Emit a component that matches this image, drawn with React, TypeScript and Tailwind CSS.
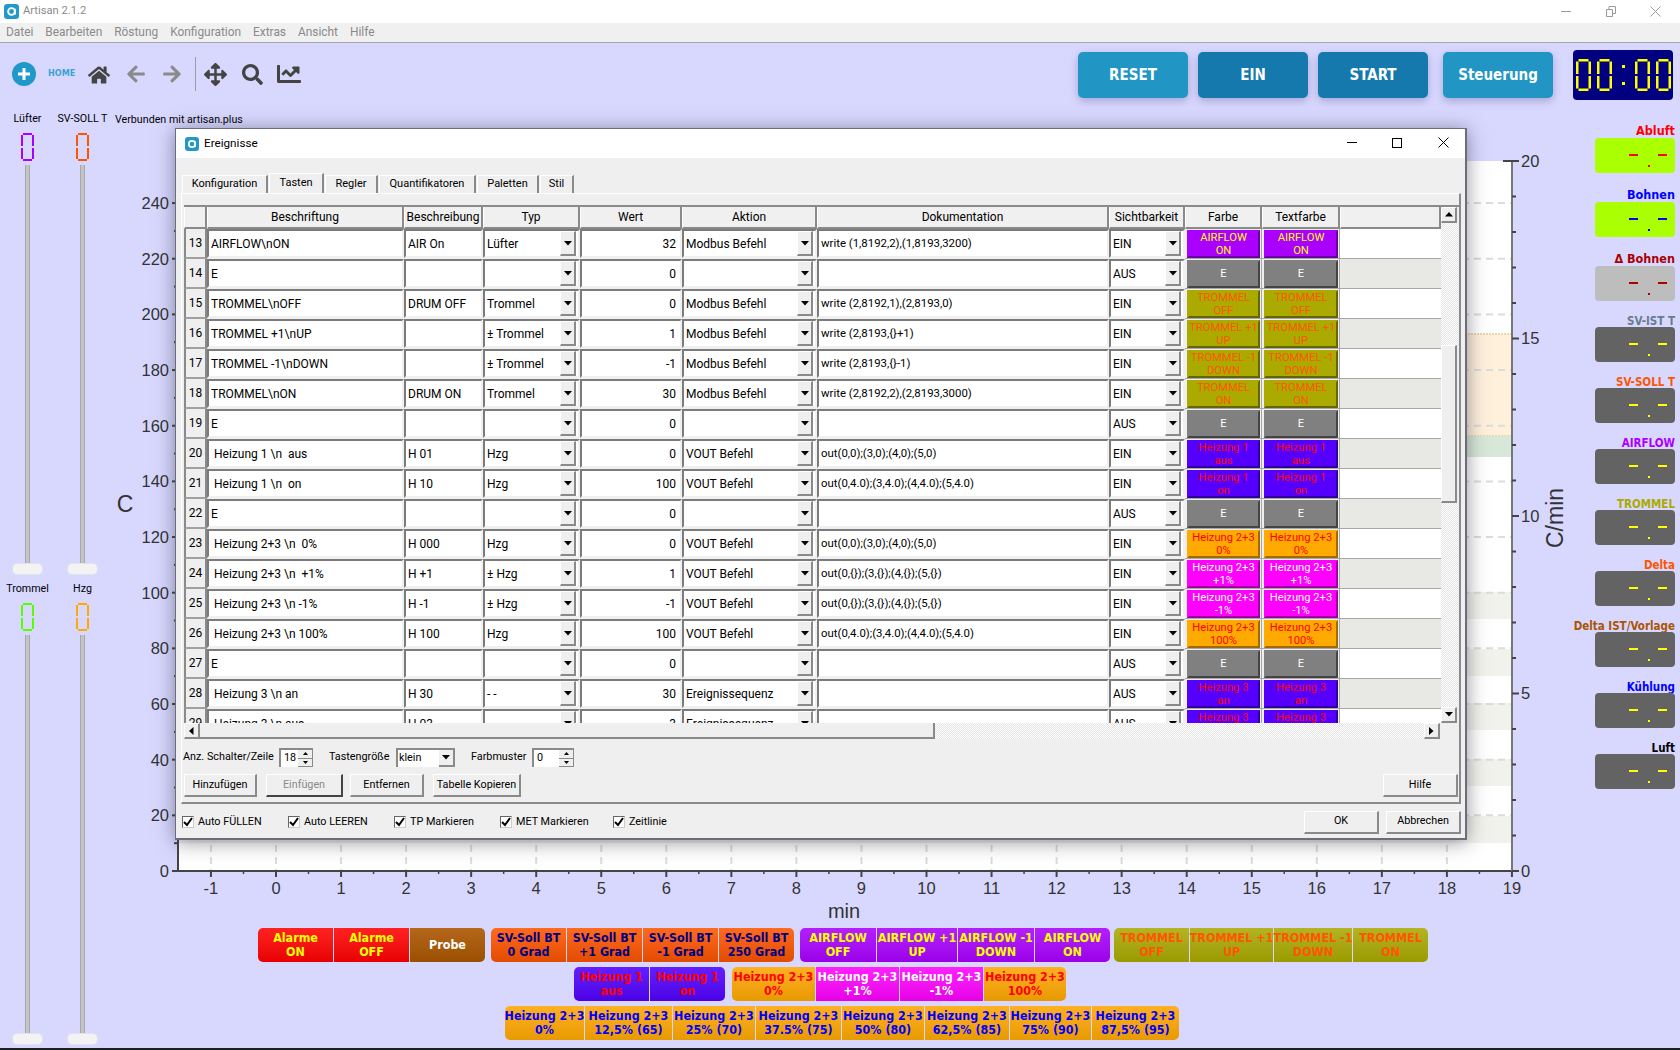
import React from 'react';
import { FaHome, FaArrowLeft, FaArrowRight, FaArrowsAlt, FaSearch, FaChartLine } from 'react-icons/fa';

const AppIcon = ({ s = 15 }: { s?: number }) => (
  <svg width={s} height={s} viewBox="0 0 16 16" className="shrink-0">
    <rect x="0" y="0" width="16" height="16" rx="3.5" fill="#2098c8" />
    <circle cx="8" cy="8" r="3.6" fill="none" stroke="#fff" strokeWidth="2" />
    <path d="M11.6 5v6.4" stroke="#fff" strokeWidth="2" />
  </svg>
);

const Zero = ({ w, h, sw, color }: { w: number; h: number; sw: number; color: string }) => {
  const m = h / 2;
  return (
    <svg width={w} height={h} viewBox={`0 0 ${w} ${h}`} className="block shrink-0">
      <g stroke={color} strokeWidth={sw} fill="none">
        <path d={`M${sw} ${sw / 2}H${w - sw}`} />
        <path d={`M${sw} ${h - sw / 2}H${w - sw}`} />
        <path d={`M${sw / 2} ${sw}V${m - 1}`} />
        <path d={`M${sw / 2} ${m + 1}V${h - sw}`} />
        <path d={`M${w - sw / 2} ${sw}V${m - 1}`} />
        <path d={`M${w - sw / 2} ${m + 1}V${h - sw}`} />
      </g>
    </svg>
  );
};

/* ---------- sliders ---------- */
const Handle = () => <div className="h-[12px] w-[31px] rounded-[5px] bg-[#f3f3f3] border border-[#e2e2ee] shrink-0" />;

const SliderCol = ({ top, bottom, topColor, bottomColor }: { top: string; bottom: string; topColor: string; bottomColor: string }) => (
  <div className="w-[55px] flex flex-col items-center">
    <div className="h-[34px] pt-[13px] text-[10.7px] leading-[14px] text-black whitespace-nowrap">{top}</div>
    <Zero w={13} h={28} sw={2} color={topColor} />
    <div className="mt-[4px] h-[398px] w-[5px] bg-[#c4c4c4] border-x border-[#a8a8a8]" />
    <Handle />
    <div className="h-[28px] flex items-center text-[10.7px] text-black">{bottom}</div>
    <Zero w={13} h={28} sw={2} color={bottomColor} />
    <div className="mt-[4px] h-[398px] w-[5px] bg-[#c4c4c4] border-x border-[#a8a8a8]" />
    <Handle />
  </div>
);

/* ---------- right LCD column ---------- */
const lcds = [
  { l: 'Abluft', c: '#ff0000', bg: '#aaff00', big: true },
  { l: 'Bohnen', c: '#0000ff', bg: '#aaff00', big: true },
  { l: 'Δ Bohnen', c: '#aa0000', bg: '#bdbdbd', big: true },
  { l: 'SV-IST T', c: '#6a7b8c', bg: '#636363', d: '#ffff00' },
  { l: 'SV-SOLL T', c: '#ff5500', bg: '#636363', d: '#ffff00' },
  { l: 'AIRFLOW', c: '#aa00ff', bg: '#636363', d: '#ffff00' },
  { l: 'TROMMEL', c: '#aaaa00', bg: '#636363', d: '#ffff00' },
  { l: 'Delta', c: '#ff5500', bg: '#636363', d: '#ffff00' },
  { l: 'Delta IST/Vorlage', c: '#aa5500', bg: '#636363', d: '#ffff00' },
  { l: 'Kühlung', c: '#0000ff', bg: '#636363', d: '#ffff00' },
  { l: 'Luft', c: '#000000', bg: '#636363', d: '#ffff00' },
] as { l: string; c: string; bg: string; big?: boolean; d?: string }[];

const Lcd = ({ l, c, bg, big, d }: { l: string; c: string; bg: string; big?: boolean; d?: string }) => {
  const dc = d || c;
  return (
    <div className={`flex flex-col items-end ${big ? 'h-[64px]' : 'h-[61px]'}`}>
      <div
        className={`font-['DejaVu_Sans'] font-bold [font-stretch:condensed] whitespace-nowrap text-right ${big ? 'h-[19px] text-[12.5px] leading-[23px]' : 'h-[16px] text-[11.5px] leading-[20px]'}`}
        style={{ color: c }}
      >
        {l}
      </div>
      <div className="w-[80px] h-[35px] rounded-[4px] flex items-center justify-end pr-[8px] shrink-0" style={{ backgroundColor: bg }}>
        <div className="w-[9px] h-[2px] -mt-[1px]" style={{ backgroundColor: dc }} />
        <div className="w-[2px] h-[2px] ml-[10px] mr-[8px] mt-[21px]" style={{ backgroundColor: dc }} />
        <div className="w-[9px] h-[2px] -mt-[1px]" style={{ backgroundColor: dc }} />
      </div>
    </div>
  );
};

/* ---------- chart ---------- */
const Chart = () => {
  const X0 = 276, DX = 65.05, Y0 = 871, DY = 2.783;
  const xs = Array.from({ length: 21 }, (_, i) => i - 1);
  const ys = Array.from({ length: 13 }, (_, i) => i * 20);
  const minorR = Array.from({ length: 21 }, (_, i) => 871 - i * 35.5);
  const sideBands = [592, 649, 703, 759, 816];
  return (
    <svg width="1475" height="795" viewBox="115 125 1475 795" className="block overflow-visible">
      <rect x="178" y="161" width="1334" height="710" fill="#ffffff" />
      <rect x="178" y="334" width="1334" height="102" fill="#fff0dc" />
      <path d="M178 334H1512M178 436H1512" stroke="#ead7ae" strokeWidth="2" strokeDasharray="2 1" />
      <rect x="178" y="436" width="1334" height="21" fill="#d8e8d8" />
      {sideBands.map((y) => <rect key={y} x="178" y={y} width="1334" height="27" fill="#f2f2ec" />)}
      {ys.slice(1).map((v) => <path key={v} d={`M178 ${Y0 - v * DY}H1512`} stroke="#dcdcdc" strokeWidth="2" strokeDasharray="7 5" />)}
      {xs.map((v) => <path key={v} d={`M${X0 + v * DX} 161V871`} stroke="#dcdcdc" strokeWidth="2" strokeDasharray="7 5" />)}
      <path d="M178 161V871H1512" fill="none" stroke="#444" strokeWidth="2" />
      <path d="M1512 161V871" stroke="#777" strokeWidth="2" />
      <path d="M1503 161H1519" stroke="#444" strokeWidth="2" />
      {minorR.map((y, i) => <path key={i} d={`M1512 ${y}H${i % 5 === 0 ? 1519 : 1516}`} stroke="#444" strokeWidth="2" />)}
      {ys.map((v) => <path key={v} d={`M172 ${Y0 - v * DY}H178`} stroke="#444" strokeWidth="2" />)}
      {ys.slice(0, -1).map((v) => <path key={v} d={`M174 ${Y0 - (v + 10) * DY}H178`} stroke="#444" strokeWidth="2" />)}
      {xs.map((v) => <path key={v} d={`M${X0 + v * DX} 871V877`} stroke="#444" strokeWidth="2" />)}
      {xs.slice(0, -1).map((v) => <path key={v} d={`M${X0 + (v + 0.5) * DX} 871V874`} stroke="#444" strokeWidth="1.5" />)}
      <g fontFamily="'Liberation Sans', sans-serif" fontSize="16.5" fill="#333">
        {ys.map((v) => <text key={v} x="169" y={Y0 - v * DY + 6} textAnchor="end">{v}</text>)}
        {xs.map((v) => <text key={v} x={X0 + v * DX} y="894" textAnchor="middle">{v}</text>)}
        {[[20, 161], [15, 338], [10, 516], [5, 693], [0, 871]].map(([v, y]) => (
          <text key={v} x="1521" y={y + 6}>{v}</text>
        ))}
        <text x="125" y="512" textAnchor="middle" fontSize="23">C</text>
        <text x="844" y="918" textAnchor="middle" fontSize="20">min</text>
        <text x="1563" y="518" textAnchor="middle" fontSize="23" transform="rotate(-90 1563 518)">C/min</text>
      </g>
    </svg>
  );
};

/* ---------- event buttons ---------- */
type Ev = { t: string; w: number; g: string; c: string };
const G = {
  red: 'from-[#ff2020] to-[#e80000]',
  brown: 'from-[#b5671a] to-[#9a5000]',
  orange: 'from-[#ff6a1e] to-[#e24c00]',
  purple: 'from-[#b41eff] to-[#9a00e8]',
  olive: 'from-[#b4b420] to-[#9a9a00]',
  violet: 'from-[#631eff] to-[#4c00e4]',
  amber: 'from-[#ffb020] to-[#e89a00]',
  magenta: 'from-[#ff20ff] to-[#e600e6]',
};
const EvGroup = ({ items, className = '' }: { items: Ev[]; className?: string }) => (
  <div className={`flex gap-px ${className}`}>
    {items.map((b, i) => (
      <div
        key={i}
        className={`h-[34px] flex items-center justify-center text-center bg-gradient-to-b whitespace-pre font-['DejaVu_Sans'] font-bold [font-stretch:condensed] text-[12.4px] leading-[14px] ${b.g} ${i === 0 ? 'rounded-l-[5px]' : ''} ${i === items.length - 1 ? 'rounded-r-[5px]' : ''}`}
        style={{ width: b.w, color: b.c }}
      >
        {b.t}
      </div>
    ))}
  </div>
);

const row1a: Ev[] = [
  { t: 'Alarme\nON', w: 75, g: G.red, c: '#ffff00' },
  { t: 'Alarme\nOFF', w: 75, g: G.red, c: '#ffff00' },
  { t: 'Probe', w: 75, g: G.brown, c: '#ffffff' },
];
const row1b: Ev[] = ['0 Grad', '+1 Grad', '-1 Grad', '250 Grad'].map((s) => ({ t: 'SV-Soll BT\n' + s, w: 75, g: G.orange, c: '#000080' }));
const row1c: Ev[] = [
  { t: 'AIRFLOW\nOFF', w: 76, g: G.purple, c: '#ffff00' },
  { t: 'AIRFLOW +1\nUP', w: 80, g: G.purple, c: '#ffff00' },
  { t: 'AIRFLOW -1\nDOWN', w: 76, g: G.purple, c: '#ffff00' },
  { t: 'AIRFLOW\nON', w: 75, g: G.purple, c: '#ffff00' },
];
const row1d: Ev[] = [
  { t: 'TROMMEL\nOFF', w: 75, g: G.olive, c: '#ff5500' },
  { t: 'TROMMEL +1\nUP', w: 83, g: G.olive, c: '#ff5500' },
  { t: 'TROMMEL -1\nDOWN', w: 78, g: G.olive, c: '#ff5500' },
  { t: 'TROMMEL\nON', w: 75, g: G.olive, c: '#ff5500' },
];
const row2a: Ev[] = [
  { t: 'Heizung 1\naus', w: 75, g: G.violet, c: '#ff0000' },
  { t: 'Heizung 1\non', w: 75, g: G.violet, c: '#ff0000' },
];
const row2b: Ev[] = [
  { t: 'Heizung 2+3\n0%', w: 83, g: G.amber, c: '#ff0000' },
  { t: 'Heizung 2+3\n+1%', w: 83, g: G.magenta, c: '#ffffff' },
  { t: 'Heizung 2+3\n-1%', w: 83, g: G.magenta, c: '#ffffff' },
  { t: 'Heizung 2+3\n100%', w: 82, g: G.amber, c: '#ff0000' },
];
const row3: Ev[] = [
  ['0%', 79], ['12,5% (65)', 87], ['25% (70)', 82], ['37.5% (75)', 85], ['50% (80)', 82], ['62,5% (85)', 84], ['75% (90)', 81], ['87,5% (95)', 87],
].map(([s, w]) => ({ t: 'Heizung 2+3\n' + s, w: w as number, g: G.amber, c: '#0000ff' }));

/* ---------- dialog table ---------- */
type R = { n: number; a: string; b: string; ty: string; w: string; ak: string; d: string; s: string; bt: string; bg: string; bd: string; c: string };
const P = { bg: '#aa00ff', bd: '#6a00a0', c: '#ffff00' };
const GY = { bg: '#808080', bd: '#444444', c: '#ffffff' };
const OL = { bg: '#aaaa00', bd: '#666600', c: '#ff5500' };
const VI = { bg: '#5500ff', bd: '#30009a', c: '#ff0000' };
const AM = { bg: '#ffaa00', bd: '#a06a00', c: '#ff0000' };
const MA = { bg: '#ff00ff', bd: '#a000a0', c: '#ffffff' };
const E = (n: number): R => ({ n, a: 'E', b: '', ty: '', w: '0', ak: '', d: '', s: 'AUS', bt: 'E', ...GY });
const rows: R[] = [
  { n: 13, a: 'AIRFLOW\\nON', b: 'AIR On', ty: 'Lüfter', w: '32', ak: 'Modbus Befehl', d: 'write (1,8192,2),(1,8193,3200)', s: 'EIN', bt: 'AIRFLOW\nON', ...P },
  E(14),
  { n: 15, a: 'TROMMEL\\nOFF', b: 'DRUM OFF', ty: 'Trommel', w: '0', ak: 'Modbus Befehl', d: 'write (2,8192,1),(2,8193,0)', s: 'EIN', bt: 'TROMMEL\nOFF', ...OL },
  { n: 16, a: 'TROMMEL +1\\nUP', b: '', ty: '± Trommel', w: '1', ak: 'Modbus Befehl', d: 'write (2,8193,{}+1)', s: 'EIN', bt: 'TROMMEL +1\nUP', ...OL },
  { n: 17, a: 'TROMMEL -1\\nDOWN', b: '', ty: '± Trommel', w: '-1', ak: 'Modbus Befehl', d: 'write (2,8193,{}-1)', s: 'EIN', bt: 'TROMMEL -1\nDOWN', ...OL },
  { n: 18, a: 'TROMMEL\\nON', b: 'DRUM ON', ty: 'Trommel', w: '30', ak: 'Modbus Befehl', d: 'write (2,8192,2),(2,8193,3000)', s: 'EIN', bt: 'TROMMEL\nON', ...OL },
  E(19),
  { n: 20, a: ' Heizung 1 \\n  aus', b: 'H 01', ty: 'Hzg', w: '0', ak: 'VOUT Befehl', d: 'out(0,0);(3,0);(4,0);(5,0)', s: 'EIN', bt: 'Heizung 1\naus', ...VI },
  { n: 21, a: ' Heizung 1 \\n  on', b: 'H 10', ty: 'Hzg', w: '100', ak: 'VOUT Befehl', d: 'out(0,4.0);(3,4.0);(4,4.0);(5,4.0)', s: 'EIN', bt: 'Heizung 1\non', ...VI },
  E(22),
  { n: 23, a: ' Heizung 2+3 \\n  0%', b: 'H 000', ty: 'Hzg', w: '0', ak: 'VOUT Befehl', d: 'out(0,0);(3,0);(4,0);(5,0)', s: 'EIN', bt: 'Heizung 2+3\n0%', ...AM },
  { n: 24, a: ' Heizung 2+3 \\n  +1%', b: 'H +1', ty: '± Hzg', w: '1', ak: 'VOUT Befehl', d: 'out(0,{});(3,{});(4,{});(5,{})', s: 'EIN', bt: 'Heizung 2+3\n+1%', ...MA },
  { n: 25, a: ' Heizung 2+3 \\n -1%', b: 'H -1', ty: '± Hzg', w: '-1', ak: 'VOUT Befehl', d: 'out(0,{});(3,{});(4,{});(5,{})', s: 'EIN', bt: 'Heizung 2+3\n-1%', ...MA },
  { n: 26, a: ' Heizung 2+3 \\n 100%', b: 'H 100', ty: 'Hzg', w: '100', ak: 'VOUT Befehl', d: 'out(0,4.0);(3,4.0);(4,4.0);(5,4.0)', s: 'EIN', bt: 'Heizung 2+3\n100%', ...AM },
  E(27),
  { n: 28, a: ' Heizung 3 \\n an', b: 'H 30', ty: '- -', w: '30', ak: 'Ereignissequenz', d: '', s: 'AUS', bt: 'Heizung 3\nan', ...VI },
  { n: 29, a: ' Heizung 3 \\n aus', b: 'H 03', ty: '', w: '3', ak: 'Ereignissequenz', d: '', s: 'AUS', bt: 'Heizung 3\naus', ...VI },
];

const W = { num: 23, a: 197, b: 79, ty: 97, w: 102, ak: 135, d: 292, s: 76, f: 77, t: 78, rest: 101 };

const Tri = ({ dir = 'down' }: { dir?: 'down' | 'up' | 'left' | 'right' }) => {
  const d = { down: 'M0 0h8L4 4.5z', up: 'M0 4.5h8L4 0z', left: 'M4.5 0v8L0 4z', right: 'M0 0v8L4.5 4z' }[dir];
  const hor = dir === 'left' || dir === 'right';
  return (
    <svg width={hor ? 5 : 8} height={hor ? 8 : 5} viewBox={hor ? '0 0 5 8' : '0 0 8 5'} className="block">
      <path d={d} fill="#000" />
    </svg>
  );
};

const Inp = ({ children, right, className = '' }: { children?: React.ReactNode; right?: boolean; className?: string }) => (
  <div className={`h-[29px] flex items-center bg-white border-2 border-t-[#7b7b7b] border-l-[#7b7b7b] border-r-[#f0f0f0] border-b-[#f0f0f0] whitespace-pre overflow-hidden ${right ? 'justify-end pr-[4px]' : 'pl-[2px]'} ${className}`}>
    {children}
  </div>
);

const Combo = ({ v }: { v: string }) => (
  <div className="h-[29px] flex items-center justify-between bg-white border-2 border-t-[#7b7b7b] border-l-[#7b7b7b] border-r-[#f0f0f0] border-b-[#f0f0f0] pl-[2px] pr-[2px] overflow-hidden">
    <span className="whitespace-pre">{v}</span>
    <div className="w-[16px] h-[25px] flex items-center justify-center bg-[#efefef] border-t border-l border-white border-r-2 border-b-2 border-r-[#8a8a8a] border-b-[#8a8a8a] shrink-0">
      <Tri />
    </div>
  </div>
);

const ColorBtn = ({ r }: { r: R }) => (
  <div
    className="mx-[1px] h-[28px] w-[75px] border-2 flex items-center justify-center text-center whitespace-pre text-[11.2px] leading-[13px] overflow-hidden"
    style={{ backgroundColor: r.bg, color: r.c, borderRightColor: r.bd, borderBottomColor: r.bd, borderTopColor: r.bg, borderLeftColor: r.bg }}
  >
    {r.bt}
  </div>
);

const Head = ({ w, children }: { w: number; children?: React.ReactNode }) => (
  <div className="h-[22px] flex items-center justify-center bg-[#f0f0f0] border-r-2 border-b-2 border-r-[#8a8a8a] border-b-[#8a8a8a] border-l border-l-white shrink-0" style={{ width: w }}>
    {children}
  </div>
);

const Row = ({ r }: { r: R }) => (
  <div className="flex h-[30px] shrink-0">
    <div className="flex items-center justify-center bg-[#efefef] border-l-2 border-r-2 border-b-2 border-[#8a8a8a] border-b-[#a0a0a0] shrink-0" style={{ width: W.num }}>{r.n}</div>
    <div style={{ width: W.a }} className="shrink-0"><Inp>{r.a}</Inp></div>
    <div style={{ width: W.b }} className="shrink-0"><Inp>{r.b}</Inp></div>
    <div style={{ width: W.ty }} className="shrink-0"><Combo v={r.ty} /></div>
    <div style={{ width: W.w }} className="shrink-0"><Inp right>{r.w}</Inp></div>
    <div style={{ width: W.ak }} className="shrink-0"><Combo v={r.ak} /></div>
    <div style={{ width: W.d }} className="shrink-0"><Inp className="text-[11.4px]">{r.d}</Inp></div>
    <div style={{ width: W.s }} className="shrink-0"><Combo v={r.s} /></div>
    <div style={{ width: W.f }} className="shrink-0 flex items-center border-b border-[#a8a8a8] pl-[1px] border-r border-r-[#a8a8a8]"><ColorBtn r={r} /></div>
    <div style={{ width: W.t }} className="shrink-0 flex items-center border-b border-[#a8a8a8] pl-[1px] border-r border-r-[#a8a8a8]"><ColorBtn r={r} /></div>
    <div style={{ width: W.rest }} className={`shrink-0 border-b border-[#a8a8a8] ${r.n % 2 === 0 ? 'bg-[#e8e8e4]' : 'bg-white'}`} />
  </div>
);

const dither = "bg-[repeating-conic-gradient(#e4e4e4_0_25%,#ffffff_0_50%)] bg-[length:2px_2px]";
const ScrollBtn = ({ dir, className = '' }: { dir: 'up' | 'down' | 'left' | 'right'; className?: string }) => (
  <div className={`w-[16px] h-[16px] shrink-0 flex items-center justify-center bg-[#efefef] border-t border-l border-white border-r-2 border-b-2 border-r-[#8a8a8a] border-b-[#8a8a8a] ${className}`}>
    <Tri dir={dir} />
  </div>
);

const Btn = ({ w, children, dis, className = '' }: { w: number; children: React.ReactNode; dis?: boolean; className?: string }) => (
  <div
    className={`h-[23px] flex items-center justify-center whitespace-nowrap bg-[#efefef] border-t border-l border-white border-r-2 border-b-2 ${dis ? 'text-[#8a8a8a] border-r-[#444] border-b-[#444]' : 'border-r-[#8a8a8a] border-b-[#8a8a8a]'} shrink-0 ${className}`}
    style={{ width: w }}
  >
    {children}
  </div>
);

const Spin = ({ v, w }: { v: string; w: number }) => (
  <div className="h-[19px] flex items-center justify-between bg-white border-l-2 border-t-2 border-l-[#8a8a8a] border-t-[#8a8a8a] pl-[3px] shrink-0" style={{ width: w }}>
    <span>{v}</span>
    <div className="w-[15px] h-full flex flex-col bg-[#efefef] border-r border-b border-[#8a8a8a]">
      <div className="flex-1 flex items-center justify-center border-b border-[#8a8a8a]"><svg width="5" height="3"><path d="M0 3h5L2.5 0z" fill="#000" /></svg></div>
      <div className="flex-1 flex items-center justify-center"><svg width="5" height="3"><path d="M0 0h5L2.5 3z" fill="#000" /></svg></div>
    </div>
  </div>
);

const Check = ({ label, w }: { label: string; w: number }) => (
  <div className="flex items-center gap-[4px] shrink-0" style={{ width: w }}>
    <div className="w-[12px] h-[12px] bg-white border border-t-[#666] border-l-[#666] border-r-[#ccc] border-b-[#ccc] flex items-center justify-center shrink-0">
      <svg width="10" height="10" viewBox="0 0 10 10"><path d="M1 5l3 3 5-7" stroke="#000" strokeWidth="2" fill="none" /></svg>
    </div>
    <span className="whitespace-nowrap">{label}</span>
  </div>
);

const Tab = ({ w, active, children }: { w: number; active?: boolean; children: React.ReactNode }) => (
  <div
    className={`flex items-center justify-center shrink-0 text-[11px] border-t border-l border-white border-r-2 border-r-[#8a8a8a] ${active ? 'h-[20px] bg-[#efefef]' : 'h-[18px]'}`}
    style={{ width: w }}
  >
    {children}
  </div>
);

const Dialog = () => (
  <div className="absolute left-[175px] top-[128px] w-[1292px] h-[712px] bg-[#efefef] border-t border-l border-r-2 border-b-2 border-[#6c6c7a] shadow-[0_2px_18px_rgba(40,40,60,0.5)] flex flex-col text-[12px] text-black">
    <div className="h-[29px] bg-white flex items-center shrink-0 pl-[9px]">
      <AppIcon s={14} />
      <span className="ml-[5px] text-[11.7px]">Ereignisse</span>
      <div className="ml-auto -mt-[2px] flex items-center">
        <div className="w-[10px] h-[1px] bg-black mr-[35px]" />
        <div className="w-[10px] h-[10px] border border-black mr-[36px]" />
        <svg width="11" height="11" className="mr-[16px]"><path d="M0.5 0.5L10.5 10.5M10.5 0.5L0.5 10.5" stroke="#000" /></svg>
      </div>
    </div>
    {/* tabs */}
    <div className="flex items-end h-[35px] pl-[6px] gap-px shrink-0">
      <Tab w={86}>Konfiguration</Tab>
      <Tab w={55} active>Tasten</Tab>
      <Tab w={53}>Regler</Tab>
      <Tab w={97}>Quantifikatoren</Tab>
      <Tab w={62}>Paletten</Tab>
      <Tab w={34}>Stil</Tab>
    </div>
    {/* pane */}
    <div className="ml-[5px] w-[1280px] h-[611px] border-t border-t-white border-l border-l-white border-r-2 border-b-2 border-r-[#8a8a8a] border-b-[#8a8a8a] pl-[2px] pt-[11px] shrink-0 flex flex-col">
      <div className="w-[1275px] h-[534px] flex flex-col border-t-2 border-[#8a8a8a] shrink-0">
        <div className="flex flex-1 min-h-0">
          <div className="w-[1257px] flex flex-col overflow-hidden">
            <div className="flex shrink-0">
              <Head w={W.num} />
              <Head w={W.a}>Beschriftung</Head>
              <Head w={W.b}>Beschreibung</Head>
              <Head w={W.ty}>Typ</Head>
              <Head w={W.w}>Wert</Head>
              <Head w={W.ak}>Aktion</Head>
              <Head w={W.d}>Dokumentation</Head>
              <Head w={W.s}>Sichtbarkeit</Head>
              <Head w={W.f}>Farbe</Head>
              <Head w={W.t}>Textfarbe</Head>
              <Head w={W.rest} />
            </div>
            {rows.map((r) => <Row key={r.n} r={r} />)}
          </div>
          <div className="w-[17px] flex flex-col shrink-0">
            <ScrollBtn dir="up" />
            <div className={`h-[122px] ${dither}`} />
            <div className="h-[158px] w-[16px] bg-[#efefef] border-t border-l border-white border-r-2 border-b-2 border-r-[#8a8a8a] border-b-[#8a8a8a]" />
            <div className={`flex-1 ${dither}`} />
            <ScrollBtn dir="down" />
          </div>
        </div>
        <div className="h-[16px] flex shrink-0">
          <ScrollBtn dir="left" />
          <div className="w-[735px] h-[16px] bg-[#efefef] border-r-2 border-b-2 border-r-[#8a8a8a] border-b-[#8a8a8a]" />
          <div className={`w-[489px] ${dither}`} />
          <ScrollBtn dir="right" />
        </div>
      </div>
      <div className="flex items-center h-[19px] mt-[9px] shrink-0 text-[10.8px]">
        <span className="whitespace-nowrap w-[96px] -ml-[1px]">Anz. Schalter/Zeile</span>
        <Spin v="18" w={34} />
        <span className="ml-[16px] w-[67px] whitespace-nowrap">Tastengröße</span>
        <div className="w-[59px] h-[19px] flex items-center justify-between bg-white border-l-2 border-t-2 border-l-[#8a8a8a] border-t-[#8a8a8a] pl-[1px] shrink-0">
          <span>klein</span>
          <div className="w-[16px] h-full flex items-center justify-center bg-[#efefef] border-r-2 border-b-2 border-[#8a8a8a]"><Tri /></div>
        </div>
        <span className="ml-[16px] w-[61px] whitespace-nowrap">Farbmuster</span>
        <Spin v="0" w={42} />
      </div>
      <div className="flex items-center h-[23px] mt-[7px] shrink-0 text-[10.8px]">
        <Btn w={73}>Hinzufügen</Btn>
        <Btn w={77} dis className="ml-[9px]">Einfügen</Btn>
        <Btn w={74} className="ml-[7px]">Entfernen</Btn>
        <Btn w={88} className="ml-[9px]">Tabelle Kopieren</Btn>
        <Btn w={75} className="ml-auto mr-[1px]">Hilfe</Btn>
      </div>
    </div>
    <div className="flex-1 flex items-center pl-[6px] pr-[4px] pt-[2px] text-[10.8px]">
      <Check label="Auto FÜLLEN" w={106} />
      <Check label="Auto LEEREN" w={106} />
      <Check label="TP Markieren" w={106} />
      <Check label="MET Markieren" w={113} />
      <Check label="Zeitlinie" w={80} />
      <Btn w={75} className="ml-auto">OK</Btn>
      <Btn w={75} className="ml-[7px]">Abbrechen</Btn>
    </div>
  </div>
);

const TopBtn = ({ w, bg, children, ml }: { w: string; bg: string; children: React.ReactNode; ml: string }) => (
  <div className={`${w} ${bg} ${ml} h-[46px] rounded-[5px] flex items-center justify-center text-white font-['DejaVu_Sans'] font-bold [font-stretch:condensed] text-[15px] shadow-[0_3px_8px_rgba(70,70,130,0.35)]`}>
    {children}
  </div>
);

export default function App() {
  return (
    <div className="relative w-[1680px] h-[1050px] overflow-hidden flex flex-col bg-[#d8d8ff] font-['Roboto',sans-serif] text-[12px] text-black">
      {/* title bar */}
      <div className="h-[23px] bg-white flex items-center shrink-0 pl-[4px]">
        <AppIcon s={15} />
        <span className="ml-[4px] text-[11.2px] text-[#8a8a8a]">Artisan 2.1.2</span>
        <div className="ml-auto flex items-center">
          <div className="w-[10px] h-px bg-[#9a9a9a] mr-[35px]" />
          <svg width="10" height="11" className="mr-[34px]"><path d="M0.5 3.5h6v7h-6zM3 3V0.5h6.5v7H7" fill="none" stroke="#9a9a9a" /></svg>
          <svg width="11" height="11" className="mr-[19px]"><path d="M0.5 0.5L10.5 10.5M10.5 0.5L0.5 10.5" stroke="#9a9a9a" /></svg>
        </div>
      </div>
      {/* menu */}
      <div className="h-[20px] bg-[#f0f0f0] border-b border-[#a8a8a8] flex items-center gap-[12px] pl-[6px] text-[11.9px] text-[#8a8a8a] shrink-0">
        {['Datei', 'Bearbeiten', 'Röstung', 'Konfiguration', 'Extras', 'Ansicht', 'Hilfe'].map((m) => <span key={m}>{m}</span>)}
      </div>
      {/* toolbar */}
      <div className="h-[57px] pt-[7px] flex items-center shrink-0">
        <div className="ml-[12px] w-[24px] h-[24px] rounded-full bg-[#2098c8] flex items-center justify-center -mt-[2px]">
          <svg width="14" height="14"><path d="M7 1v12M1 7h12" stroke="#fff" strokeWidth="3" /></svg>
        </div>
        <span className="ml-[12px] -mt-[2px] font-['DejaVu_Sans'] [font-stretch:condensed] font-bold text-[9px] text-[#3ba3d0] w-[26px]">HOME</span>
        <div className="ml-[14px] flex items-center text-[#444]">
          <FaHome size={22} className="text-[#444]" />
          <FaArrowLeft size={20} className="ml-[16px] text-[#8a8a8a] -mt-[2px]" />
          <FaArrowRight size={20} className="ml-[16px] text-[#8a8a8a] -mt-[2px]" />
          <div className="ml-[13px] w-[1px] h-[34px] bg-[#9a9aa8] -mt-[2px]" />
          <FaArrowsAlt size={23} className="ml-[8px] -mt-[2px]" />
          <FaSearch size={21} className="ml-[15px] -mt-[2px]" />
          <FaChartLine size={24} className="ml-[14px] -mt-[2px]" />
        </div>
        <TopBtn w="w-[110px]" bg="bg-[#2196c4]" ml="ml-auto">RESET</TopBtn>
        <TopBtn w="w-[110px]" bg="bg-[#1579ae]" ml="ml-[10px]">EIN</TopBtn>
        <TopBtn w="w-[110px]" bg="bg-[#1579ae]" ml="ml-[10px]">START</TopBtn>
        <TopBtn w="w-[110px]" bg="bg-[#2196c4]" ml="ml-[15px]">Steuerung</TopBtn>
        <div className="ml-[20px] mr-[7px] w-[100px] h-[50px] rounded-[4px] bg-[#000080] flex items-center justify-center" role="img" aria-label="00:00">
          <Zero w={15} h={32} sw={2.5} color="#ffff00" />
          <div className="ml-[6px]"><Zero w={15} h={32} sw={2.5} color="#ffff00" /></div>
          <div className="mx-[10px] h-[20px] flex flex-col justify-between">
            <div className="w-[3px] h-[3px] bg-[#ffff00]" />
            <div className="w-[3px] h-[3px] bg-[#ffff00]" />
          </div>
          <Zero w={15} h={32} sw={2.5} color="#ffff00" />
          <div className="ml-[6px]"><Zero w={15} h={32} sw={2.5} color="#ffff00" /></div>
        </div>
      </div>
      {/* main */}
      <div className="flex flex-1 min-h-0">
        <div className="w-[115px] flex shrink-0 -mt-[1px]">
          <SliderCol top="Lüfter" bottom="Trommel" topColor="#aa00ff" bottomColor="#55ff00" />
          <SliderCol top="SV-SOLL T" bottom="Hzg" topColor="#ff5500" bottomColor="#ffaa00" />
        </div>
        <div className="flex-1 flex flex-col min-w-0">
          <div className="h-[25px] pt-[13px] text-[10.7px] leading-[14px] whitespace-nowrap">Verbunden mit artisan.plus</div>
          <Chart />
          <div className="mt-[8px] pl-[143px] flex">
            <EvGroup items={row1a} />
            <EvGroup items={row1b} className="ml-[6px]" />
            <EvGroup items={row1c} className="ml-[6px]" />
            <EvGroup items={row1d} className="ml-[4px]" />
          </div>
          <div className="mt-[5px] pl-[459px] flex gap-[7px]">
            <EvGroup items={row2a} />
            <EvGroup items={row2b} />
          </div>
          <div className="mt-[5px] pl-[390px]">
            <EvGroup items={row3} />
          </div>
        </div>
        <div className="w-[90px] flex flex-col items-end pr-[5px] pt-[19px] shrink-0">
          {lcds.map((l) => <Lcd key={l.l} {...l} />)}
        </div>
      </div>
      <div className="h-[2px] bg-[#1f1f1f] shrink-0" />
      <Dialog />
    </div>
  );
}
